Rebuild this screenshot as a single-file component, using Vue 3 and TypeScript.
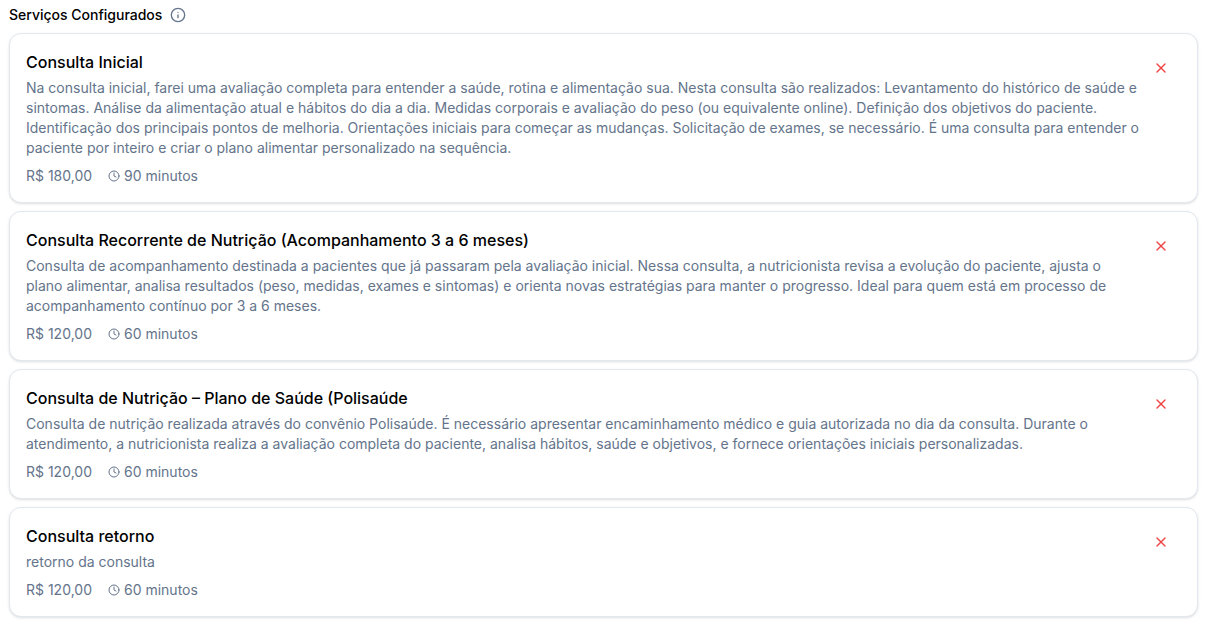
<script setup lang="ts">
interface Service {
  name: string
  description: string
  price: string
  duration: string
}

const services: Service[] = [
  {
    name: 'Consulta Inicial',
    description:
      'Na consulta inicial, farei uma avaliação completa para entender a saúde, rotina e alimentação sua. Nesta consulta são realizados: Levantamento do histórico de saúde e sintomas. Análise da alimentação atual e hábitos do dia a dia. Medidas corporais e avaliação do peso (ou equivalente online). Definição dos objetivos do paciente. Identificação dos principais pontos de melhoria. Orientações iniciais para começar as mudanças. Solicitação de exames, se necessário. É uma consulta para entender o paciente por inteiro e criar o plano alimentar personalizado na sequência.',
    price: 'R$ 180,00',
    duration: '90 minutos',
  },
  {
    name: 'Consulta Recorrente de Nutrição (Acompanhamento 3 a 6 meses)',
    description:
      'Consulta de acompanhamento destinada a pacientes que já passaram pela avaliação inicial. Nessa consulta, a nutricionista revisa a evolução do paciente, ajusta o plano alimentar, analisa resultados (peso, medidas, exames e sintomas) e orienta novas estratégias para manter o progresso. Ideal para quem está em processo de acompanhamento contínuo por 3 a 6 meses.',
    price: 'R$ 120,00',
    duration: '60 minutos',
  },
  {
    name: 'Consulta de Nutrição – Plano de Saúde (Polisaúde',
    description:
      'Consulta de nutrição realizada através do convênio Polisaúde. É necessário apresentar encaminhamento médico e guia autorizada no dia da consulta. Durante o atendimento, a nutricionista realiza a avaliação completa do paciente, analisa hábitos, saúde e objetivos, e fornece orientações iniciais personalizadas.',
    price: 'R$ 120,00',
    duration: '60 minutos',
  },
  {
    name: 'Consulta retorno',
    description: 'retorno da consulta',
    price: 'R$ 120,00',
    duration: '60 minutos',
  },
]
</script>

<template>
  <section class="services" aria-labelledby="services-title">
    <header class="heading">
      <h2 id="services-title">Serviços Configurados</h2>
      <svg class="info" viewBox="0 0 24 24" aria-hidden="true">
        <circle cx="12" cy="12" r="10" />
        <path d="M12 16v-4" />
        <path d="M12 8h.01" />
      </svg>
    </header>
    <ul class="list">
      <li v-for="service in services" :key="service.name" class="card">
        <div class="body">
          <h3>{{ service.name }}</h3>
          <p class="description">{{ service.description }}</p>
          <div class="meta">
            <span>{{ service.price }}</span>
            <span class="duration">
              <svg class="clock" viewBox="0 0 24 24" aria-hidden="true">
                <circle cx="12" cy="12" r="10" />
                <path d="M12 6v6l4 2" />
              </svg>
              {{ service.duration }}
            </span>
          </div>
        </div>
        <button type="button" class="remove" :aria-label="`Remover ${service.name}`">
          <svg viewBox="0 0 24 24" aria-hidden="true">
            <path d="M18 6 6 18" />
            <path d="m6 6 12 12" />
          </svg>
        </button>
      </li>
    </ul>
  </section>
</template>

<style>
body {
  background: #ffffff;
}
</style>

<style scoped>
.services {
  padding: 5px 9px 8px;
  font-family: Inter, 'Liberation Sans', sans-serif;
  font-size: 14px;
  line-height: 20px;
  color: #000000;
}

.heading {
  display: flex;
  align-items: center;
  gap: 8px;
  margin-bottom: 8px;
}

h2,
h3,
p,
ul {
  margin: 0;
  padding: 0;
}

h2 {
  font-size: 14px;
  font-weight: 500;
  line-height: 20px;
}

svg {
  flex: none;
  fill: none;
  stroke: currentColor;
  stroke-width: 2;
  stroke-linecap: round;
  stroke-linejoin: round;
}

.info {
  width: 16px;
  height: 16px;
  color: #64748b;
}

.list {
  display: flex;
  flex-direction: column;
  gap: 8px;
  list-style: none;
}

.card {
  display: flex;
  align-items: flex-start;
  justify-content: space-between;
  padding: 16px;
  border: 1px solid #e2e8f0;
  border-radius: 12px;
  background: #ffffff;
  box-shadow: 0 1px 3px rgba(0, 0, 0, 0.1), 0 1px 2px -1px rgba(0, 0, 0, 0.1);
}

.body {
  flex: 1;
  min-width: 0;
}

h3 {
  font-size: 16px;
  font-weight: 500;
  line-height: 24px;
}

.description {
  margin-top: 4px;
  color: #64748b;
}

.meta {
  display: flex;
  gap: 16px;
  margin-top: 8px;
  color: #64748b;
}

.duration {
  display: flex;
  align-items: center;
  gap: 4px;
}

.clock {
  width: 12px;
  height: 12px;
}

.remove {
  display: flex;
  align-items: center;
  justify-content: center;
  width: 40px;
  height: 36px;
  padding: 0;
  border: 0;
  border-radius: 6px;
  background: transparent;
  color: #ef4444;
  cursor: pointer;
}

.remove svg {
  width: 16px;
  height: 16px;
}
</style>
